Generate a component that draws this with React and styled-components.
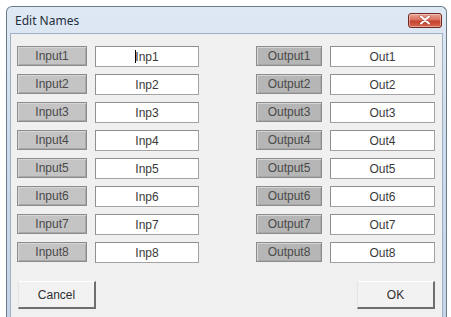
import React from "react";
import styled, { createGlobalStyle } from "styled-components";

const Global = createGlobalStyle`
  html, body {
    margin: 0;
    padding: 0;
    background: #ffffff;
    overflow: hidden;
  }
  body {
    font-family: "Liberation Sans", Arial, sans-serif;
  }
`;

const rows = [1, 2, 3, 4, 5, 6, 7, 8];

export default function App() {
  return (
    <>
      <Global />
      <Window>
        <TitleBar>
          <Title>Edit Names</Title>
          <CloseButton>
            <svg width="12" height="10" viewBox="0 0 12 10">
              <path
                d="M2 1.5 L10 8.5 M10 1.5 L2 8.5"
                stroke="#7a2a22"
                strokeWidth="3.2"
                strokeLinecap="round"
                opacity="0.45"
              />
              <path
                d="M2 1.5 L10 8.5 M10 1.5 L2 8.5"
                stroke="#ffffff"
                strokeWidth="2"
                strokeLinecap="round"
              />
            </svg>
          </CloseButton>
        </TitleBar>
        <Client>
          <Rows>
            {rows.map((n) => (
              <Row key={n}>
                <Pair>
                  <Label $w={70} $bg="#c4c4c4">Input{n}</Label>
                  <Field $w={104}>
                    {n === 1 && <Caret />}
                    Inp{n}
                  </Field>
                </Pair>
                <Pair>
                  <Label $w={66} $bg="#b6b6b6">Output{n}</Label>
                  <Field $w={105}>Out{n}</Field>
                </Pair>
              </Row>
            ))}
          </Rows>
          <Buttons>
            <Button>Cancel</Button>
            <Button>OK</Button>
          </Buttons>
        </Client>
      </Window>
    </>
  );
}

const Window = styled.div`
  margin: 6px 0 0 6px;
  width: 441px;
  height: 330px;
  box-sizing: border-box;
  border: 1px solid #6b7b8c;
  border-bottom: none;
  border-radius: 6px 6px 0 0;
  background: linear-gradient(180deg, #dfe9f4 0%, #cddcec 40%, #c4d4e6 100%);
  display: flex;
  flex-direction: column;
  padding: 0 3px;
`;

const TitleBar = styled.div`
  height: 26px;
  display: flex;
  align-items: center;
  justify-content: space-between;
  padding: 0 1px 4px 5px;
  box-sizing: border-box;
`;

const Title = styled.div`
  font-family: "Noto Sans", "Open Sans", sans-serif;
  font-size: 12px;
  color: #1f2e3d;
  padding-top: 4px;
`;

const CloseButton = styled.div`
  width: 34px;
  height: 15px;
  margin-top: 4px;
  box-sizing: border-box;
  border: 1px solid #6e2a22;
  border-radius: 3px;
  background: linear-gradient(180deg, #e9a597 0%, #d9705e 45%, #c5412d 55%, #d5664e 100%);
  box-shadow: inset 0 0 0 1px rgba(255, 220, 210, 0.5);
  display: flex;
  align-items: center;
  justify-content: center;
`;

const Client = styled.div`
  flex: 1;
  background: #f0f0f0;
  border: 1px solid #9fb0c2;
  padding: 12px 7px 0 6px;
  display: flex;
  flex-direction: column;
`;

const Rows = styled.div`
  display: flex;
  flex-direction: column;
  gap: 8px;
`;

const Row = styled.div`
  display: flex;
  justify-content: space-between;
  height: 20px;
`;

const Pair = styled.div`
  display: flex;
  gap: 8px;
`;

const Label = styled.div`
  width: ${(p) => p.$w}px;
  height: 20px;
  box-sizing: border-box;
  background: ${(p) => p.$bg};
  border: 1px solid #8c8c8c;
  box-shadow: inset 1px 1px 0 #d6d6d6, inset -1px -1px 0 #a8a8a8;
  color: #4a4a4a;
  font-size: 12px;
  display: flex;
  align-items: center;
  justify-content: center;
`;

const Field = styled.div`
  width: ${(p) => p.$w}px;
  height: 21px;
  box-sizing: border-box;
  background: #ffffff;
  border: 1px solid #a3a3a3;
  border-top-color: #8f8f8f;
  border-left-color: #8f8f8f;
  color: #3a3a3a;
  font-size: 12px;
  display: flex;
  align-items: center;
  justify-content: center;
`;

const Caret = styled.span`
  display: inline-block;
  width: 1px;
  height: 13px;
  background: #000;
  margin-right: -1px;
`;

const Buttons = styled.div`
  display: flex;
  justify-content: space-between;
  margin-top: 19px;
  padding: 0 0 0 1px;
`;

const Button = styled.div`
  width: 78px;
  height: 28px;
  box-sizing: border-box;
  background: #f2f2f2;
  border-top: 1px solid #ffffff;
  border-left: 1px solid #e4e4e4;
  border-right: 2px solid #6e6e6e;
  border-bottom: 2px solid #6e6e6e;
  color: #2e2e2e;
  font-size: 12px;
  display: flex;
  align-items: center;
  justify-content: center;
`;
